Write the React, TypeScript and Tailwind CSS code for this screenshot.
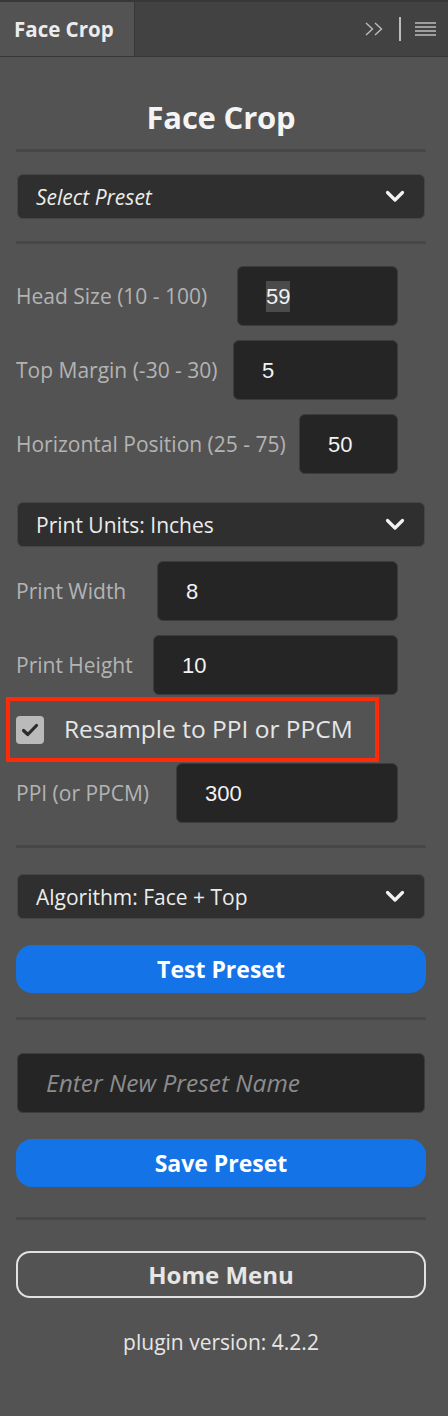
import { ReactNode } from "react";

const font = { fontFamily: "'Open Sans', 'Noto Sans', sans-serif" };

const Chevron = () => (
  <svg width="20" height="13" viewBox="0 0 20 13" className="shrink-0">
    <path d="M2.5 2.5 L10 10 L17.5 2.5" fill="none" stroke="#f2f2f2" strokeWidth="3.2" strokeLinecap="round" strokeLinejoin="round" />
  </svg>
);

const Divider = ({ className }: { className: string }) => (
  <div className={`h-[3px] rounded-full bg-[#474747] ${className}`} />
);

const Dropdown = ({ label, italic, className }: { label: string; italic?: boolean; className: string }) => (
  <div
    className={`mx-px flex h-[45px] items-center justify-between rounded-[6px] border border-[#464646] bg-[#2f2f2f] pl-[18px] pr-[19px] ${className}`}
  >
    <span className={`pt-[3px] text-[21px] text-[#ececec] ${italic ? "italic" : ""}`}>{label}</span>
    <Chevron />
  </div>
);

// label on the left, number box pinned to the right edge
const NumberRow = ({
  label,
  value,
  width,
  selected,
  className,
}: {
  label: string;
  value: string;
  width: string;
  selected?: boolean;
  className: string;
}) => (
  <div className={`flex items-center justify-between pr-[28px] ${className}`}>
    <span className="pt-px text-[21px] text-[#b3b3b3]">{label}</span>
    <div className={`flex h-[60px] items-center rounded-[6px] border border-[#3c3c3c] bg-[#252525] pl-[28px] ${width}`}>
      <span
        className={`text-[22px] leading-[31px] text-[#f2f2f2] ${selected ? "bg-[#4b4b4b]" : ""}`}
        style={{ fontFamily: "'Liberation Sans', Arial, sans-serif" }}
      >
        {value}
      </span>
    </div>
  </div>
);

const BlueButton = ({ children, className }: { children: ReactNode; className: string }) => (
  <button className={`flex h-[48px] w-full items-center justify-center rounded-[16px] bg-[#1473e6] text-[23px] font-bold text-white ${className}`}>
    {children}
  </button>
);

export default function App() {
  return (
    <div className="flex h-[1416px] w-full flex-col bg-[#535353]" style={font}>
      {/* Panel tab bar */}
      <div className="h-[2px] bg-[#383838]" />
      <div className="flex h-[55px] items-stretch border-b border-[#383838] bg-[#424242]">
        <div className="flex w-[135px] items-center border-r border-[#383838] bg-[#535353] pl-[14px] text-[20.5px] font-bold text-[#ececec]">
          Face Crop
        </div>
        <div className="flex flex-1 items-center justify-end gap-[14px] pr-[12px]">
          <svg width="20" height="14" viewBox="0 0 20 14">
            <path d="M1 1 L7.5 7 L1 13 M10 1 L16.5 7 L10 13" fill="none" stroke="#bdbdbd" strokeWidth="1.4" />
          </svg>
          <div className="h-[24px] w-[2px] bg-[#bdbdbd]" />
          <svg width="21" height="14" viewBox="0 0 21 14">
            <path d="M0 1 H21 M0 5 H21 M0 9 H21 M0 13 H21" stroke="#bdbdbd" strokeWidth="1.6" />
          </svg>
        </div>
      </div>

      <main className="flex flex-col pl-4 pr-[22px]">
        <h1 className="mt-[40px] text-center text-[31px] font-bold leading-[40px] tracking-[-0.2px] text-[#f4f4f4]">Face Crop</h1>
        <Divider className="mt-[12px]" />

        <Dropdown label="Select Preset" italic className="mt-[22px]" />
        <Divider className="mt-[22px]" />

        <NumberRow label="Head Size (10 - 100)" value="59" width="w-[161px]" selected className="mt-[22px]" />
        <NumberRow label="Top Margin (-30 - 30)" value="5" width="w-[165px]" className="mt-[14px]" />
        <NumberRow label="Horizontal Position (25 - 75)" value="50" width="w-[99px]" className="mt-[14px]" />

        <Dropdown label="Print Units: Inches" className="mt-[28px]" />
        <NumberRow label="Print Width" value="8" width="w-[241px]" className="mt-[14px]" />
        <NumberRow label="Print Height" value="10" width="w-[245px]" className="mt-[14px]" />

        {/* highlighted checkbox */}
        <div className="ml-[-10px] mt-[2px] flex h-[65px] w-[373px] items-center border-[4px] border-[#ff2a0a] pl-[6px]">
          <div className="flex h-[28px] w-[28px] items-center justify-center rounded-[4px] bg-[#bababa]">
            <svg width="18" height="14" viewBox="0 0 18 14">
              <path d="M2.5 7.5 L6.8 11.5 L15.5 2.5" fill="none" stroke="#2b2b2b" strokeWidth="3.2" strokeLinecap="round" strokeLinejoin="round" />
            </svg>
          </div>
          <span className="ml-[20px] text-[24.5px] text-[#e6e6e6]">Resample to PPI or PPCM</span>
        </div>

        <NumberRow label="PPI (or PPCM)" value="300" width="w-[222px]" className="mt-px" />
        <Divider className="mt-[22px]" />

        <Dropdown label="Algorithm: Face + Top" className="mt-[26px]" />
        <BlueButton className="mt-[26px]">Test Preset</BlueButton>
        <Divider className="mt-[24px]" />

        <div className="mx-px mt-[33px] flex h-[60px] items-center rounded-[6px] border border-[#3c3c3c] bg-[#252525] pl-[28px]">
          <span className="text-[24.5px] italic text-[#8c8c8c]">Enter New Preset Name</span>
        </div>
        <BlueButton className="mt-[26px]">Save Preset</BlueButton>
        <Divider className="mt-[30px]" />

        <button className="mt-[31px] flex h-[47px] w-full items-center justify-center rounded-[14px] border-2 border-[#e2e2e2] text-[24px] font-bold text-[#e6e6e6]">
          Home Menu
        </button>
        <p className="mt-[32px] text-center text-[21px] leading-[24px] text-[#e6e6e6]">plugin version: 4.2.2</p>
      </main>
    </div>
  );
}
